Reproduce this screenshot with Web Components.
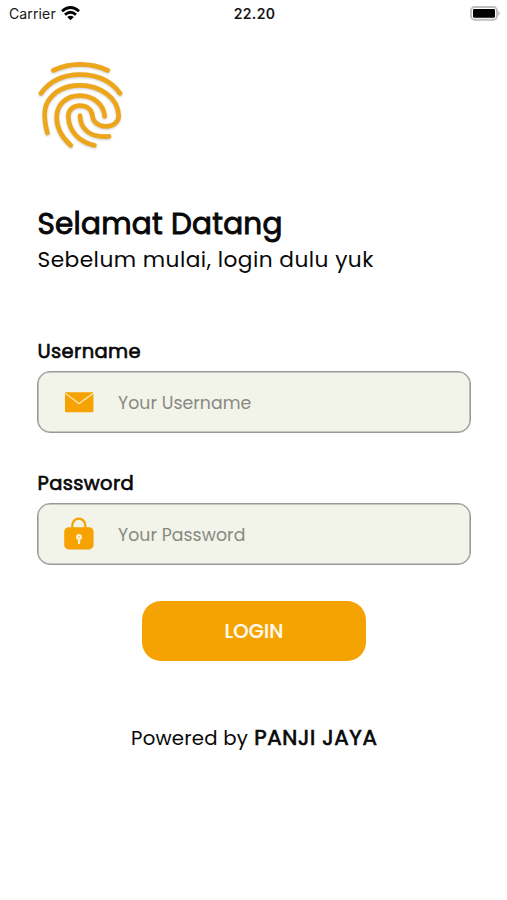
<!DOCTYPE html>
<html lang="id">
<head>
<meta charset="utf-8">
<title>Login</title>
<style>
html,body{margin:0;background:#fff}
body{font-family:Poppins,Inter,"Open Sans",sans-serif;color:#080808}
</style>
</head>
<body>
<login-screen></login-screen>
<script>
const define = (name, html) => customElements.define(name, class extends HTMLElement {
  constructor() {
    super();
    this.attachShadow({mode: 'open'}).innerHTML = html;
  }
});

define('status-bar', `<style>
:host{display:grid;grid-template-columns:1fr auto 1fr;align-items:center;height:27px;padding:0 7px 0 9px;font-family:Inter,sans-serif;font-size:14px;color:#161616}
.left{display:flex;align-items:center;gap:6px}
.left span{letter-spacing:.13px}
.time{font-weight:600;letter-spacing:.35px}
svg{display:block}
.left svg{margin-left:-1px}
.battery{justify-self:end;margin-top:-1px}
</style>
<div class="left"><span>Carrier</span>
<svg width="19" height="15" viewBox="0 0 19 15"><g fill="none" stroke="#000" stroke-width="2.8"><path d="M1 5.2Q9.5-2.2 18 5.2"/><path d="M4 8.7Q9.5 3.9 15 8.7"/></g><path d="M6.2 11.1Q9.5 8.5 12.8 11.1L9.5 14.2Z"/></svg></div>
<span class="time">22.20</span>
<svg class="battery" width="30" height="15" viewBox="0 0 30 15"><rect x="1" y="1" width="26" height="12.8" rx="3.8" fill="#fff" stroke="#bdbdbd" stroke-width="1.9"/><rect x="3" y="3" width="22" height="8.8" rx="1.3"/><path d="M28.2 4.8Q31.4 7.4 28.2 10Z" fill="#bdbdbd"/></svg>`);

define('fingerprint-logo', `<style>:host{display:block;width:100px;height:100px}svg{display:block;filter:drop-shadow(0 1px 1px #0003)}</style>
<svg width="100" height="100" viewBox="0 0 300 300" fill="none" stroke="#eda51a" stroke-width="14" stroke-linecap="round" stroke-linejoin="round">
<path d="M70 49Q108 31 150 31Q196 31 233 49"/>
<path d="M33 118C60 80 100 62 150 62C202 62 243 80 270 118"/>
<path d="M52 237C41 194 40 166 53 144C73 110 108 94 150 94C212 94 264 132 266 185C266 205 249 217 228 217C205 217 188 203 187 184C186 166 170 155 150 155C129 155 114 168 115 188C117 235 150 264 193 274"/>
<path d="M122 274C95 250 80 220 80 190C80 150 110 125 150 125C190 125 222 152 224 187"/>
<path d="M150 185C151 226 181 252 237 247"/></svg>`);

define('mail-icon', `<style>:host,svg{display:block}</style>
<svg width="30" height="36" viewBox="0 0 30 36"><rect x="1" y="8.3" width="28.4" height="20" rx="1.4" fill="#f6a301"/><path d="M1.6 9.6L15 19.6L28.8 9.6" fill="none" stroke="#fae3ae" stroke-width="1.3"/></svg>`);

define('lock-icon', `<style>:host,svg{display:block}</style>
<svg width="30" height="36" viewBox="0 0 30 36"><path d="M8.3 12V9.2a6.5 6.5 0 0 1 13 0V12" fill="none" stroke="#f6a301" stroke-width="2.2"/><rect x=".2" y="11.2" width="29.4" height="22.2" rx="4.5" fill="#f6a301"/><circle cx="15" cy="20.9" r="3" fill="#fcf0d3"/><path d="M13.7 21h2.8l-.4 7h-2z" fill="#fcf0d3"/><circle cx="15" cy="20.8" r=".7" fill="#f6a301"/></svg>`);

define('form-field', `<style>
:host{display:block}
.label{display:block;height:34px;line-height:30px;padding-left:.5px;font-size:19.5px;letter-spacing:.36px;-webkit-text-stroke:.65px currentColor}
.box{box-sizing:border-box;display:flex;align-items:center;height:61.5px;padding-left:26px;gap:24px;border:1px solid #999;box-shadow:inset 0 0 0 .6px #999;border-radius:13px;background:#f2f3e9}
.hint{padding-top:2px;font-size:17.3px;color:#888983;letter-spacing:.08px}
</style>
<span class="label"><slot name="label"></slot></span>
<div class="box"><slot name="icon"></slot><span class="hint"><slot></slot></span></div>`);

define('login-button', `<style>
:host{display:block}
button{display:flex;align-items:center;justify-content:center;width:224px;height:60px;padding:2px 0 0;border:0;border-radius:19px;background:#f5a302;color:#fffaf0;font:500 19.5px Poppins,Inter,sans-serif;letter-spacing:.15px;-webkit-text-stroke:.2px currentColor}
</style><button><slot></slot></button>`);

define('login-screen', `<style>
:host{display:block;box-sizing:border-box;height:900px;overflow:hidden;background:#fff}
main{padding:27px 36.5px 0 37px}
fingerprint-logo{margin-left:-7px}
h1,p{margin:0;white-space:nowrap}
h1{margin-top:50px;height:40px;line-height:40.5px;padding-left:.5px;font-size:29.5px;font-weight:400;letter-spacing:.22px;-webkit-text-stroke:.9px currentColor}
.sub{height:32px;line-height:32px;padding-left:.5px;font-size:21.7px;letter-spacing:.46px}
.user{margin-top:61px}
.pass{margin-top:36.5px}
login-button{margin:36px 0 0 105px}
.credit{display:flex;align-items:baseline;gap:6px;margin:62.5px 0 0 94px;line-height:30px}
.powered{font-size:19.7px;letter-spacing:.23px}
.brand{font-size:21.4px;letter-spacing:.65px;-webkit-text-stroke:.7px currentColor}
</style>
<status-bar></status-bar>
<main>
<fingerprint-logo></fingerprint-logo>
<h1>Selamat Datang</h1>
<p class="sub">Sebelum mulai, login dulu yuk</p>
<form-field class="user"><span slot="label">Username</span><mail-icon slot="icon"></mail-icon>Your Username</form-field>
<form-field class="pass"><span slot="label">Password</span><lock-icon slot="icon"></lock-icon>Your Password</form-field>
<login-button>LOGIN</login-button>
<p class="credit"><span class="powered">Powered by</span><span class="brand">PANJI JAYA</span></p>
</main>`);
</script>
</body>
</html>
